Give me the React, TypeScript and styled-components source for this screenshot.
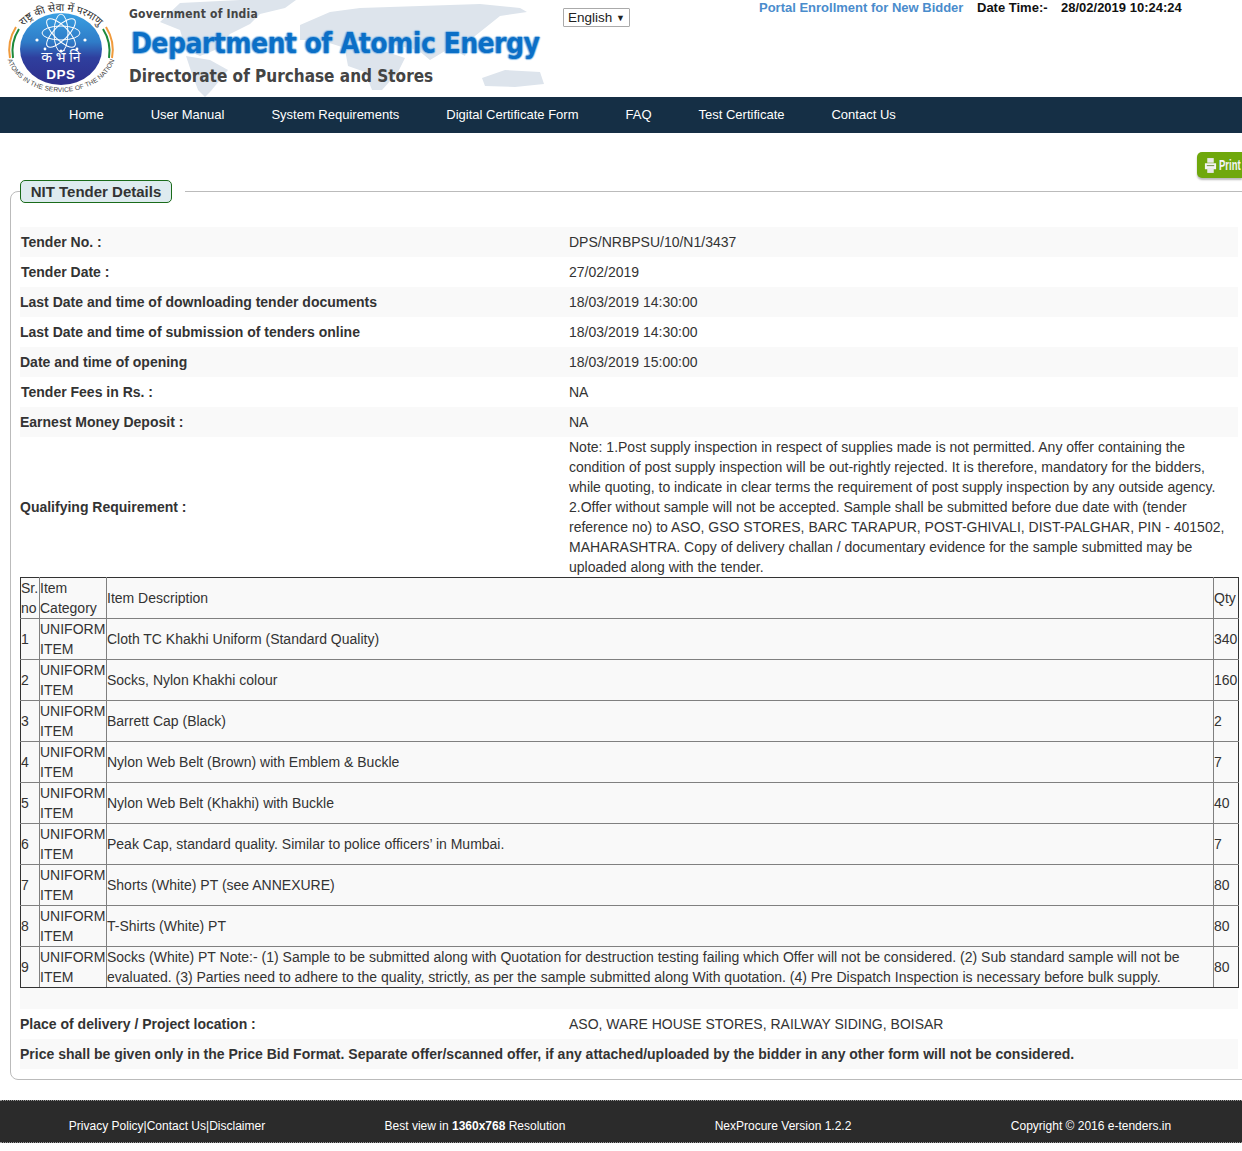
import styled, { createGlobalStyle } from "styled-components";

const GlobalStyle = createGlobalStyle`
  html, body {
    margin: 0;
    padding: 0;
    background: #fff;
    font-family: "Liberation Sans", Arial, sans-serif;
    font-size: 14px;
    line-height: 20px;
    color: #333;
  }
  body {
    overflow-x: hidden;
  }
`;

interface IDetail {
  label: string;
  value: string;
  nudge?: boolean;
}

const topDetails: IDetail[] = [
  { label: "Tender No. :", value: "DPS/NRBPSU/10/N1/3437", nudge: true },
  { label: "Tender Date :", value: "27/02/2019", nudge: true },
  { label: "Last Date and time of downloading tender documents", value: "18/03/2019 14:30:00" },
  { label: "Last Date and time of submission of tenders online", value: "18/03/2019 14:30:00" },
  { label: "Date and time of opening", value: "18/03/2019 15:00:00" },
  { label: "Tender Fees in Rs. :", value: "NA", nudge: true },
  { label: "Earnest Money Deposit :", value: "NA" },
];

const noteLines = [
  "Note: 1.Post supply inspection in respect of supplies made is not permitted. Any offer containing the",
  "condition of post supply inspection will be out-rightly rejected. It is therefore, mandatory for the bidders,",
  "while quoting, to indicate in clear terms the requirement of post supply inspection by any outside agency.",
  "2.Offer without sample will not be accepted. Sample shall be submitted before due date with (tender",
  "reference no) to ASO, GSO STORES, BARC TARAPUR, POST-GHIVALI, DIST-PALGHAR, PIN - 401502,",
  "MAHARASHTRA. Copy of delivery challan / documentary evidence for the sample submitted may be",
  "uploaded along with the tender.",
];

const items = [
  { desc: ["Cloth TC Khakhi Uniform (Standard Quality)"], qty: "340" },
  { desc: ["Socks, Nylon Khakhi colour"], qty: "160" },
  { desc: ["Barrett Cap (Black)"], qty: "2" },
  { desc: ["Nylon Web Belt (Brown) with Emblem & Buckle"], qty: "7" },
  { desc: ["Nylon Web Belt (Khakhi) with Buckle"], qty: "40" },
  { desc: ["Peak Cap, standard quality. Similar to police officers’ in Mumbai."], qty: "7" },
  { desc: ["Shorts (White) PT (see ANNEXURE)"], qty: "80" },
  { desc: ["T-Shirts (White) PT"], qty: "80" },
  {
    desc: [
      "Socks (White) PT Note:- (1) Sample to be submitted along with Quotation for destruction testing failing which Offer will not be considered. (2) Sub standard sample will not be",
      "evaluated. (3) Parties need to adhere to the quality, strictly, as per the sample submitted along With quotation. (4) Pre Dispatch Inspection is necessary before bulk supply.",
    ],
    qty: "80",
  },
];

const navLinks = [
  "Home",
  "User Manual",
  "System Requirements",
  "Digital Certificate Form",
  "FAQ",
  "Test Certificate",
  "Contact Us",
];

function Logo() {
  return (
    <LogoSvg viewBox="0 0 124 97" width="124" height="97">
      <defs>
        <linearGradient id="disc" x1="0" y1="0" x2="0" y2="1">
          <stop offset="0" stopColor="#3aa0e2" />
          <stop offset="0.4" stopColor="#2f7cc8" />
          <stop offset="0.62" stopColor="#2f3f9e" />
          <stop offset="1" stopColor="#2e2f8c" />
        </linearGradient>
        <path id="ringTop" d="M 13 50 A 48 39 0 0 1 109 50" />
        <path id="ringBottom" d="M 6 50 A 55 42 0 0 0 116 50" />
      </defs>
      <path d="M 10 58 A 50 46 0 0 1 16 27" fill="none" stroke="#f09a3c" strokeWidth="2" />
      <path d="M 13 58 A 47 44 0 0 1 19 29" fill="none" stroke="#1d8a3c" strokeWidth="2" />
      <path d="M 112 58 A 50 46 0 0 0 106 27" fill="none" stroke="#f09a3c" strokeWidth="2" />
      <path d="M 109 58 A 47 44 0 0 0 103 29" fill="none" stroke="#1d8a3c" strokeWidth="2" />
      <ellipse cx="61" cy="49" rx="41" ry="36" fill="url(#disc)" />
      <g fill="none" stroke="#fff" strokeWidth="1">
        {[0, 45, 90, 135].map((a) => (
          <ellipse key={a} cx="61" cy="33" rx="7" ry="19" transform={`rotate(${a} 61 33)`} />
        ))}
      </g>
      <g fill="#fff">
        <circle cx="37" cy="40" r="1.6" />
        <circle cx="85" cy="40" r="1.6" />
        <circle cx="61" cy="51" r="1.6" />
        <circle cx="45" cy="49" r="1.4" />
        <circle cx="77" cy="49" r="1.4" />
      </g>
      <text x="61" y="62" textAnchor="middle" fontSize="14" fill="#fff" fontFamily="'Noto Sans', sans-serif">
        क भं नि
      </text>
      <text x="61" y="79" textAnchor="middle" fontSize="13.5" fontWeight="700" letterSpacing="0.5" fill="#fff" fontFamily="'Liberation Sans', sans-serif">
        DPS
      </text>
      <text fontSize="10.5" fill="#333" fontFamily="'Noto Sans', sans-serif">
        <textPath href="#ringTop" startOffset="50%" textAnchor="middle">
          राष्ट्र की सेवा में परमाणु
        </textPath>
      </text>
      <text fontSize="6.6" letterSpacing="0.1" fill="#444" fontFamily="'Liberation Sans', sans-serif">
        <textPath href="#ringBottom" startOffset="50%" textAnchor="middle">
          ATOMS IN THE SERVICE OF THE NATION
        </textPath>
      </text>
    </LogoSvg>
  );
}

function WorldMap() {
  return (
    <MapSvg viewBox="0 0 430 97" width="430" height="97">
      <g fill="#dde4ec">
        <path d="M 60 3 L 120 0 L 176 0 L 165 8 L 140 14 L 130 24 L 110 34 L 95 50 L 80 56 L 66 50 L 60 30 L 40 22 Z" />
        <path d="M 66 56 L 90 60 L 108 70 L 100 80 L 90 92 L 85 97 L 78 90 L 72 74 Z" />
        <path d="M 180 25 L 210 12 L 240 8 L 300 6 L 360 4 L 400 8 L 407 12 L 380 16 L 365 28 L 350 40 L 345 56 L 330 48 L 310 60 L 298 50 L 270 44 L 240 40 L 225 48 L 200 40 L 180 40 Z" />
        <path d="M 225 50 L 255 48 L 285 58 L 278 72 L 262 90 L 252 90 L 245 72 L 228 66 Z" />
        <path d="M 362 78 L 385 70 L 420 72 L 424 84 L 395 87 L 365 86 Z" />
      </g>
    </MapSvg>
  );
}

function PrinterIcon() {
  return (
    <PrinterSvg viewBox="0 0 14 18" width="13" height="17" aria-hidden="true">
      <rect x="3.5" y="1" width="7" height="5" fill="#e9e9e9" />
      <path d="M1 6.5 H13 V13 H1 Z" fill="#f4f4f4" />
      <rect x="3" y="8.5" width="8" height="1.2" fill="#7d9a55" />
      <rect x="3.5" y="11.5" width="7" height="5.5" fill="#e9e9e9" />
    </PrinterSvg>
  );
}

function App() {
  return (
    <Page>
      <GlobalStyle />
      <Header>
        <WorldMap />
        <Logo />
        <Brand>
          <GovLine>Government of India</GovLine>
          <DeptLine>Department of Atomic Energy</DeptLine>
          <DirLine>Directorate of Purchase and Stores</DirLine>
        </Brand>
        <LangBox>
          English<Caret>▼</Caret>
        </LangBox>
        <TopRight>
          <Enroll>Portal Enrollment for New Bidder</Enroll>
          <DateLabel>Date Time:-</DateLabel>
          <DateValue>28/02/2019 10:24:24</DateValue>
        </TopRight>
      </Header>

      <Nav>
        {navLinks.map((link) => (
          <NavLink key={link}>{link}</NavLink>
        ))}
      </Nav>

      <PrintRow>
        <PrintButton>
          <PrinterIcon />
          <PrintText>Print</PrintText>
        </PrintButton>
      </PrintRow>

      <Panel>
        <PanelLegend>
          <PanelTitle>NIT Tender Details</PanelTitle>
        </PanelLegend>
        <Rows>
          {topDetails.map((d, i) => (
            <Row key={d.label} $shade={i % 2 === 0}>
              <Label $nudge={d.nudge}>{d.label}</Label>
              <div>{d.value}</div>
            </Row>
          ))}
          <NoteRow>
            <Label>Qualifying Requirement :</Label>
            <div>
              {noteLines.map((line) => (
                <NoteLine key={line}>{line}</NoteLine>
              ))}
            </div>
          </NoteRow>
        </Rows>

        <ItemTable>
          <colgroup>
            <col width="19" />
            <col width="67" />
            <col />
            <col width="25" />
          </colgroup>
          <tbody>
            <tr>
              <td>Sr.<br />no</td>
              <td>Item<br />Category</td>
              <td>Item Description</td>
              <td>Qty</td>
            </tr>
            {items.map((item, i) => (
              <tr key={item.desc[0]}>
                <td>{i + 1}</td>
                <td>UNIFORM<br />ITEM</td>
                <td>
                  {item.desc.map((line) => (
                    <NoteLine key={line}>{line}</NoteLine>
                  ))}
                </td>
                <td>{item.qty}</td>
              </tr>
            ))}
          </tbody>
        </ItemTable>

        <Spacer />
        <Row>
          <Label>Place of delivery / Project location :</Label>
          <div>ASO, WARE HOUSE STORES, RAILWAY SIDING, BOISAR</div>
        </Row>
        <Row $shade>
          <WideLabel>
            Price shall be given only in the Price Bid Format. Separate offer/scanned offer, if any attached/uploaded by the bidder in any other form will not be considered.
          </WideLabel>
        </Row>
      </Panel>

      <Footer>
        <FooterCell>Privacy Policy|Contact Us|Disclaimer</FooterCell>
        <FooterCell>
          Best view in <b>1360x768</b> Resolution
        </FooterCell>
        <FooterCell>NexProcure Version 1.2.2</FooterCell>
        <FooterCell>Copyright © 2016 e-tenders.in</FooterCell>
      </Footer>
    </Page>
  );
}

export default App;

const Page = styled.div`
  width: 1242px;
  height: 1151px;
  overflow: hidden;
`;

const Header = styled.header`
  position: relative;
  display: flex;
  height: 97px;
`;

const MapSvg = styled.svg`
  position: absolute;
  left: 120px;
  top: 0;
`;

const LogoSvg = styled.svg`
  position: relative;
  flex: none;
`;

const Brand = styled.div`
  position: relative;
  width: 439px;
  flex: none;
  padding-left: 5px;
  box-sizing: border-box;
  font-family: "DejaVu Sans", sans-serif;
  font-stretch: condensed;
  font-weight: 700;
  white-space: nowrap;
`;

const GovLine = styled.div`
  margin-top: 5px;
  height: 18px;
  font-size: 12px;
  line-height: 18px;
  letter-spacing: 0.2px;
  color: #444;
`;

const DeptLine = styled.div`
  margin: 2px 0 0 2px;
  height: 38px;
  font-size: 28px;
  line-height: 38px;
  letter-spacing: -0.55px;
  color: #0b6fc6;
  text-shadow: 1px 0 1px #8fbfe8, -1px 0 1px #8fbfe8, 0 1px 1px #8fbfe8, 0 -1px 1px #8fbfe8;
`;

const DirLine = styled.div`
  margin-top: 2px;
  font-size: 17px;
  line-height: 22px;
  color: #444;
`;

const LangBox = styled.div`
  position: relative;
  flex: none;
  box-sizing: border-box;
  display: flex;
  align-items: center;
  justify-content: space-between;
  width: 67px;
  height: 19px;
  margin-top: 8px;
  padding: 0 4px;
  background: #fff;
  border: 1px solid #aaa;
  border-radius: 1px;
  font-size: 13.5px;
  color: #222;
`;

const Caret = styled.span`
  font-size: 9px;
  color: #222;
`;

const TopRight = styled.div`
  position: relative;
  display: flex;
  height: 14px;
  margin-left: 129px;
  font-size: 13px;
  line-height: 15px;
  font-weight: 700;
  white-space: nowrap;
`;

const Enroll = styled.span`
  width: 218px;
  color: #4a8ccc;
`;

const DateLabel = styled.span`
  width: 84px;
  color: #111;
`;

const DateValue = styled.span`
  color: #111;
`;

const Nav = styled.nav`
  display: flex;
  height: 36px;
  padding-left: 45.5px;
  background: #152f45;
`;

const NavLink = styled.a`
  padding: 0 23.5px;
  font-size: 13px;
  line-height: 36px;
  color: #fff;
  white-space: nowrap;
`;

const PrintRow = styled.div`
  display: flex;
  justify-content: flex-end;
  height: 26px;
  margin-top: 19px;
`;

const PrintButton = styled.div`
  display: flex;
  align-items: center;
  gap: 2px;
  width: 45px;
  padding-left: 7px;
  box-sizing: border-box;
  background: #6fa80c;
  border-radius: 5px 0 0 5px;
  box-shadow: 0 2px 2px #bbb;
  overflow: hidden;
`;

const PrinterSvg = styled.svg`
  flex: none;
`;

const PrintText = styled.span`
  flex: none;
  font-size: 14px;
  font-weight: 700;
  color: #f4f4f4;
  transform: scaleX(0.68);
  transform-origin: left center;
`;

const Panel = styled.fieldset`
  width: 1240px;
  box-sizing: border-box;
  margin: 2px 0 0 10px;
  padding: 0 0 10px 9px;
  border: 1px solid #bbb;
  border-radius: 8px;
`;

const PanelLegend = styled.legend`
  padding: 0 13px 0 0;
`;

const PanelTitle = styled.div`
  display: flex;
  align-items: center;
  justify-content: center;
  box-sizing: border-box;
  width: 152px;
  height: 23px;
  background: #deebef;
  border: 1px solid #1a6b1a;
  border-radius: 5px;
  font-size: 15px;
  font-weight: 700;
  color: #333;
`;

const Rows = styled.div`
  margin-top: 24px;
  width: 1218px;
`;

const Row = styled.div<{ $shade?: boolean }>`
  display: grid;
  grid-template-columns: 549px 1fr;
  align-items: center;
  width: 1218px;
  height: 30px;
  background: ${(p) => (p.$shade ? "#f9f9f9" : "#fff")};
`;

const NoteRow = styled(Row)`
  height: 140px;
`;

const Label = styled.div<{ $nudge?: boolean }>`
  padding-left: ${(p) => (p.$nudge ? 1 : 0)}px;
  font-weight: 700;
`;

const WideLabel = styled(Label)`
  grid-column: 1 / -1;
`;

const NoteLine = styled.div`
  white-space: nowrap;
`;

const ItemTable = styled.table`
  width: 1219px;
  table-layout: fixed;
  border-collapse: collapse;
  border: 1px solid #333;
  background: #f9f9f9;
  td {
    padding: 0;
    height: 40px;
    border: 1px solid #808080;
    vertical-align: middle;
    white-space: nowrap;
  }
  tr:first-child td {
    border-top-color: #333;
  }
  tr:last-child td {
    border-bottom: 1px solid #333;
  }
  td:first-child {
    border-left-color: #333;
  }
  td:last-child {
    border-right-color: #333;
  }
`;

const Spacer = styled.div`
  width: 1218px;
  height: 21px;
  background: #f9f9f9;
`;

const Footer = styled.footer`
  display: grid;
  grid-template-columns: repeat(4, 308px);
  align-items: center;
  box-sizing: border-box;
  height: 43px;
  margin-top: 20px;
  padding: 8px 0 0 13px;
  background: #2b2b2b;
  border-top: 1px dotted #999;
  border-bottom: 1px dotted #999;
`;

const FooterCell = styled.div`
  text-align: center;
  font-size: 12px;
  color: #fff;
  white-space: nowrap;
`;
